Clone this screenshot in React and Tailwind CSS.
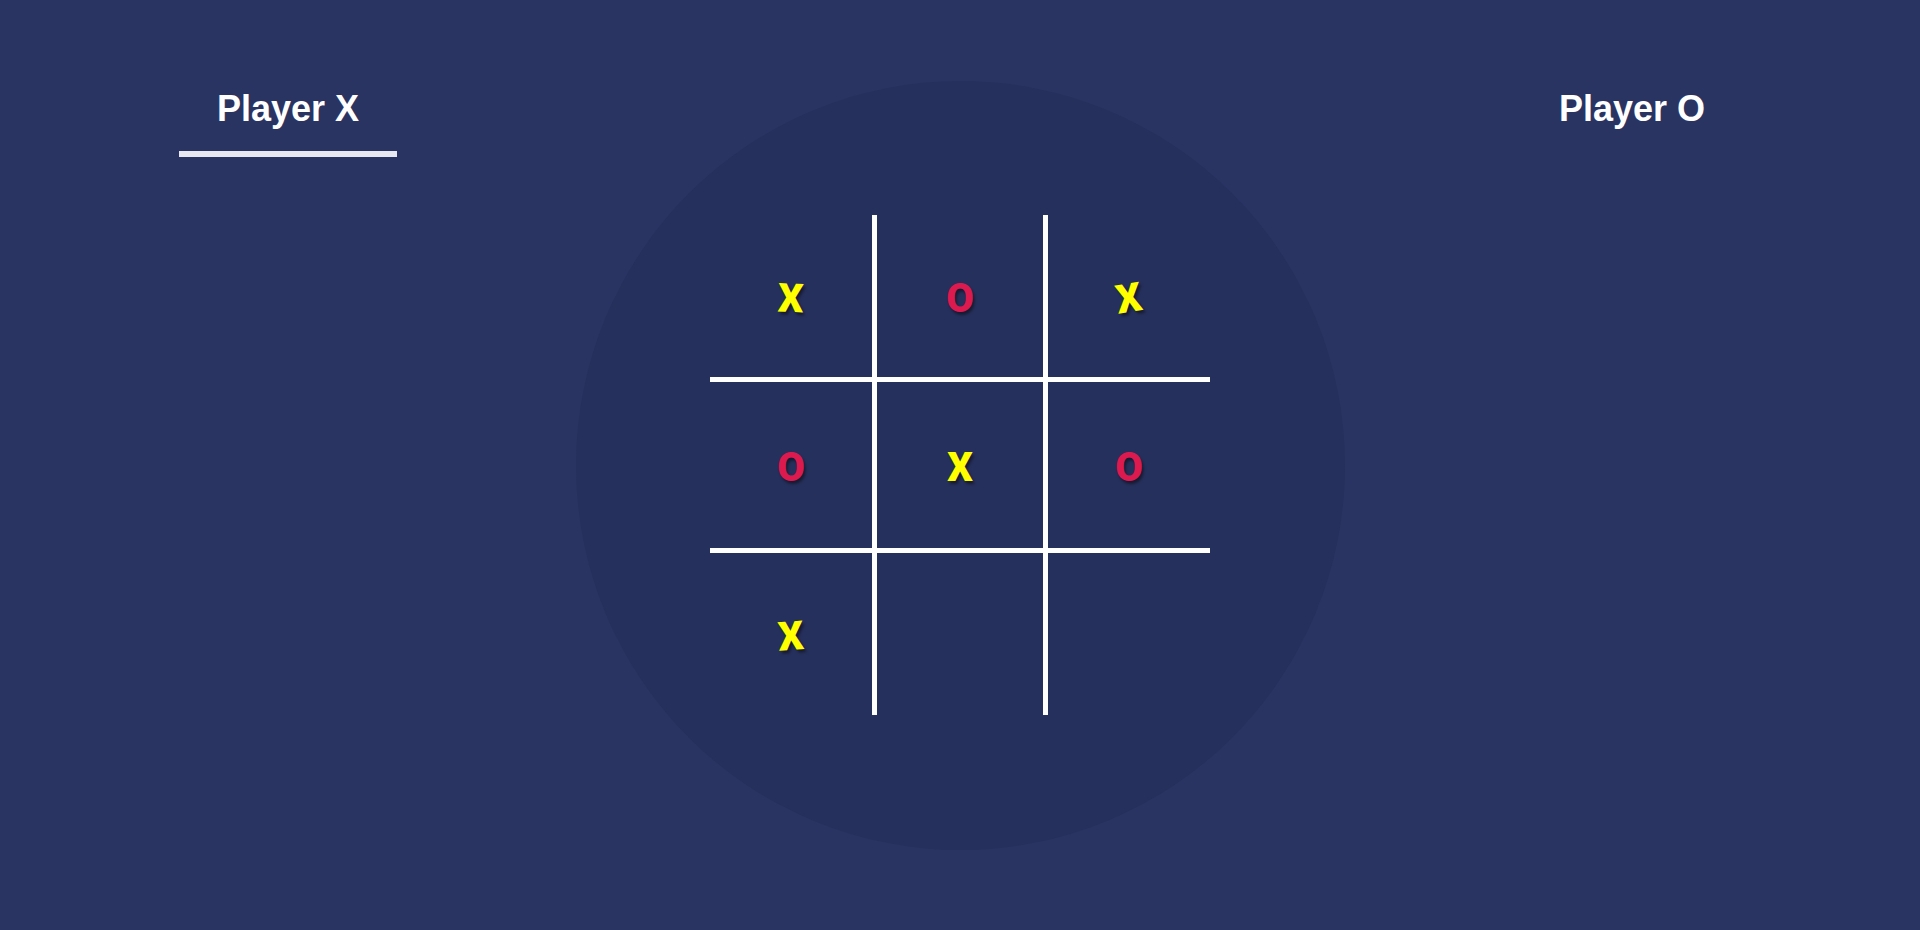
import React from "react";

const cells = [
  { v: "X", r: "rotate-[2deg]" },
  { v: "O", r: "" },
  { v: "X", r: "-rotate-[9deg]" },
  { v: "O", r: "" },
  { v: "X", r: "" },
  { v: "O", r: "" },
  { v: "X", r: "-rotate-[4deg]" },
  { v: "", r: "" },
  { v: "", r: "" },
];

const borders = [
  "",
  "border-l-[5px] border-r-[5px]",
  "",
  "border-t-[5px] border-b-[5px]",
  "border-l-[5px] border-r-[5px] border-t-[5px] border-b-[5px]",
  "border-t-[5px] border-b-[5px]",
  "",
  "border-l-[5px] border-r-[5px]",
  "",
];

export default function App() {
  return (
    <div className="grid h-[930px] w-full overflow-hidden bg-[#2a3462] font-['Liberation_Sans',Arial,sans-serif]">
      <div className="col-start-1 row-start-1 flex items-start justify-between self-start px-[179px] pt-[88px]">
        <div className="flex w-[218px] flex-col items-center">
          <div className="text-[36px] font-bold leading-[41px] text-white">Player X</div>
          <div className="mt-[22px] h-[6px] w-full bg-[#e8e9f0]"></div>
        </div>
        <div className="flex w-[218px] flex-col items-center">
          <div className="text-[36px] font-bold leading-[41px] text-white">Player O</div>
        </div>
      </div>
      <div className="col-start-1 row-start-1 h-[769px] w-[769px] self-center justify-self-center rounded-full bg-[#26305c]"></div>
      <div className="col-start-1 row-start-1 grid h-[500px] w-[500px] grid-cols-[162px_176px_162px] grid-rows-[162px_176px_162px] self-center justify-self-center">
        {cells.map((c, i) => (
          <div
            key={i}
            className={`flex items-center justify-center border-white ${borders[i]}`}
          >
            {c.v && (
              <span
                className={`mt-[5px] inline-block font-['Roboto',sans-serif] text-[40px] font-black leading-none [text-shadow:2px_3px_3px_rgba(0,0,0,0.45)] ${
                  c.v === "X" ? "text-[#ffff00]" : "text-[#dc1a4f]"
                } ${c.r}`}
              >
                {c.v}
              </span>
            )}
          </div>
        ))}
      </div>
    </div>
  );
}
